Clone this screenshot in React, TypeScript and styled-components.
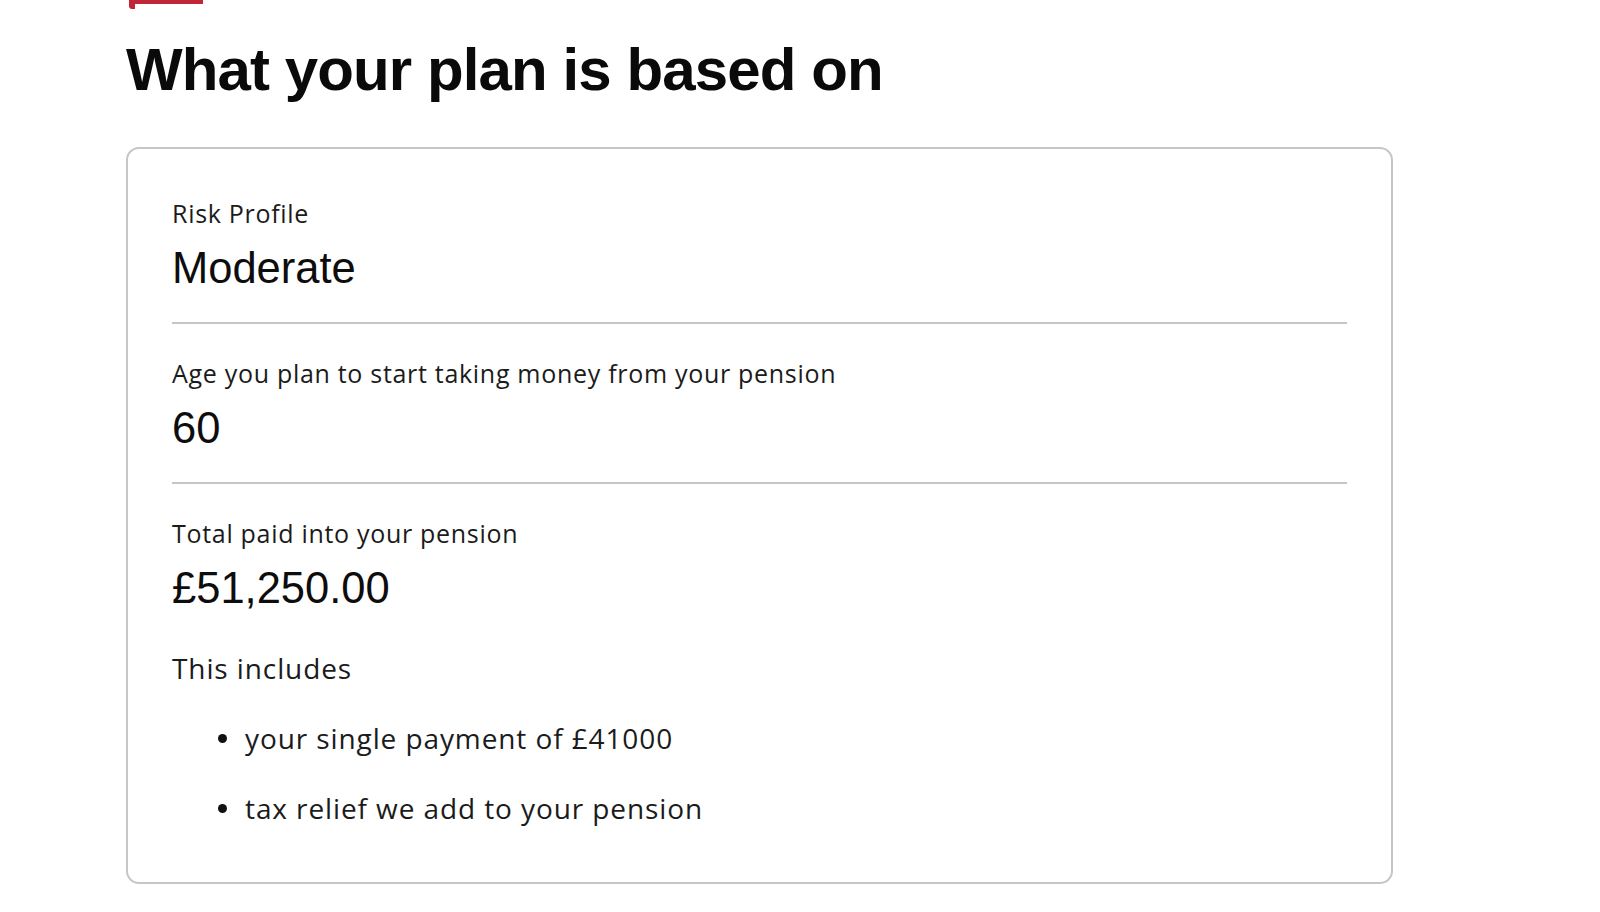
import React from "react";
import styled, { createGlobalStyle } from "styled-components";

const rows = [
  { label: "Risk Profile", value: "Moderate" },
  { label: "Age you plan to start taking money from your pension", value: "60" },
];

const includes = ["your single payment of £41000", "tax relief we add to your pension"];

const App = () => {
  return (
    <Page>
      <GlobalStyle />
      <RedMark />
      <Heading>What your plan is based on</Heading>
      <Card>
        {rows.map((row) => (
          <Section key={row.label} divider>
            <Label>{row.label}</Label>
            <Value>{row.value}</Value>
          </Section>
        ))}
        <Section>
          <Label>Total paid into your pension</Label>
          <Value>£51,250.00</Value>
          <Body>This includes</Body>
          <List>
            {includes.map((item) => (
              <Item key={item}>{item}</Item>
            ))}
          </List>
        </Section>
      </Card>
    </Page>
  );
};

export default App;

const GlobalStyle = createGlobalStyle`
  html, body {
    margin: 0;
    padding: 0;
    background: #ffffff;
  }
  * {
    box-sizing: border-box;
  }
`;

const Page = styled.div`
  padding: 0 0 0 126px;
  min-height: 912px;
  background: #ffffff;
  color: #111111;
`;

const RedMark = styled.div`
  width: 74px;
  height: 9px;
  margin-left: 3px;
  border-top: 4px solid #c0283a;
  border-left: 6px solid #c0283a;
  border-bottom-left-radius: 3px;
`;

const Heading = styled.h1`
  margin: 25px 0 41px;
  font-family: "Liberation Sans", Arial, sans-serif;
  font-weight: 700;
  font-size: 60px;
  line-height: 72px;
  letter-spacing: -0.9px;
  color: #0a0a0a;
`;

const Card = styled.div`
  width: 1267px;
  padding: 15px 44px 56px;
  border: 2px solid #c6c6c6;
  border-radius: 13px;
  background: #ffffff;
`;

const Section = styled.div<{ divider?: boolean }>`
  padding: 33px 0 ${(props) => (props.divider ? "29px" : "0")};
  border-bottom: ${(props) => (props.divider ? "2px solid #c6c6c6" : "none")};
`;

const Label = styled.div`
  font-family: "Open Sans", "Noto Sans", sans-serif;
  font-size: 25px;
  line-height: 32px;
  letter-spacing: 0.7px;
  color: #1b1b1b;
`;

const Value = styled.div`
  margin-top: 14px;
  font-family: "Liberation Sans", Arial, sans-serif;
  font-size: 43.5px;
  line-height: 50px;
  color: #0d0d0d;
`;

const Body = styled.p`
  margin: 37px 0 0;
  font-family: "Open Sans", "Noto Sans", sans-serif;
  font-size: 28px;
  line-height: 36px;
  letter-spacing: 0.9px;
  color: #1b1b1b;
`;

const List = styled.ul`
  display: flex;
  flex-direction: column;
  gap: 34px;
  margin: 34px 0 0;
  padding: 0 0 0 46px;
  list-style: none;
`;

const Item = styled.li`
  display: flex;
  align-items: center;
  gap: 18px;
  font-family: "Open Sans", "Noto Sans", sans-serif;
  font-size: 28px;
  line-height: 36px;
  letter-spacing: 0.9px;
  color: #1b1b1b;

  &::before {
    content: "";
    flex: none;
    width: 9px;
    height: 9px;
    border-radius: 50%;
    background: #111111;
  }
`;
